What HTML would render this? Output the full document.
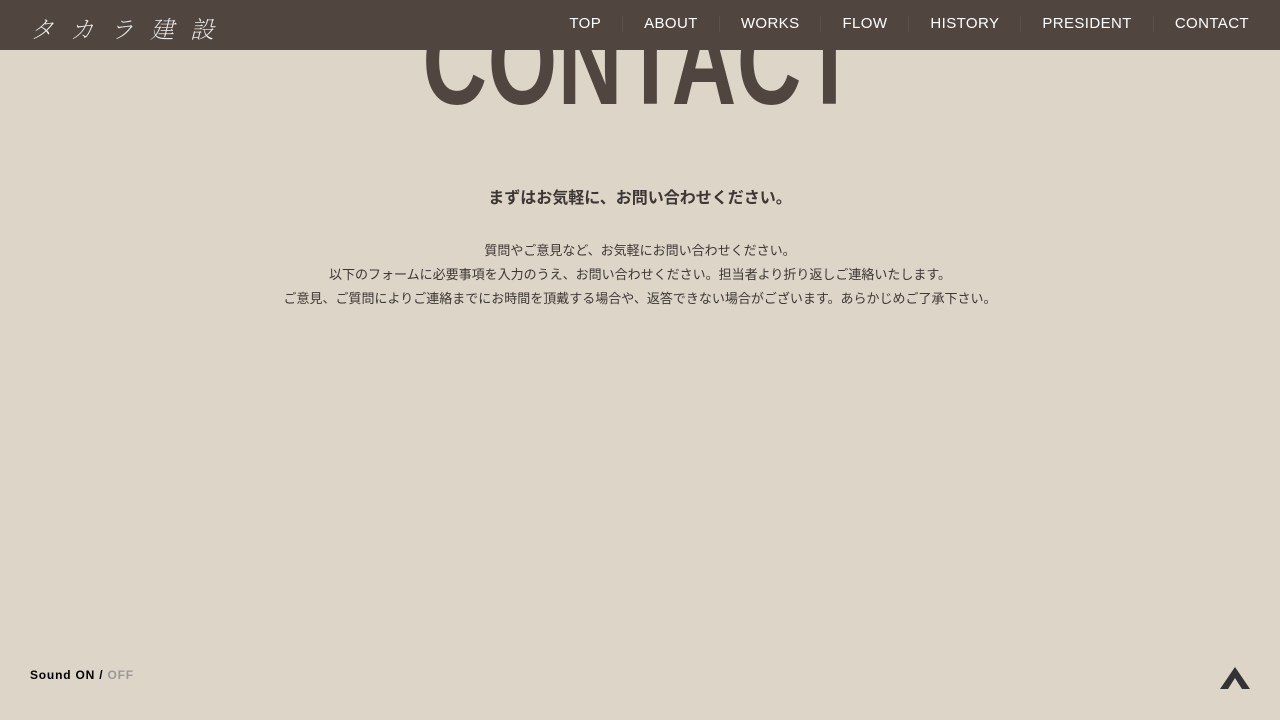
<!DOCTYPE html>
<html><head><meta charset="utf-8">
<style>
*{margin:0;padding:0;box-sizing:border-box}
html,body{width:1280px;height:720px;overflow:hidden;background:#ddd5c8;font-family:"Liberation Sans","Noto Sans CJK JP",sans-serif}
.big{position:absolute;top:0px;left:0;width:1280px;text-align:center;font-weight:bold;font-size:124px;line-height:124px;color:#51463f;letter-spacing:1px}
.big span{display:inline-block;transform:scaleX(0.72);transform-origin:center}
header{position:absolute;top:0;left:0;width:1280px;height:50px;background:#51463f}
.logo{position:absolute;left:30px;top:10px;color:#eee;font-family:"Noto Serif CJK SC",serif;font-size:24px;letter-spacing:16px;font-style:italic;font-weight:200}
nav{position:absolute;right:10px;top:0;height:47px;display:flex;align-items:center}
nav a{color:#fff;font-size:15px;letter-spacing:0.4px;padding:0 21px;border-left:1px solid #5d524b;line-height:16px;text-decoration:none}
nav a:first-child{border-left:none}
h2{position:absolute;top:184px;width:1280px;text-align:center;font-size:16px;font-weight:bold;color:#3d3733}
.p{position:absolute;top:239px;width:1280px;text-align:center;font-size:13px;line-height:24px;color:#3d3733}
.snd{position:absolute;left:30px;top:668px;font-size:12px;font-weight:bold;color:#000;letter-spacing:.8px}
.snd span{color:#999}
</style></head><body>
<div class="big"><span>CONTACT</span></div>
<header><div class="logo">タカラ建設</div>
<nav><a>TOP</a><a>ABOUT</a><a>WORKS</a><a>FLOW</a><a>HISTORY</a><a>PRESIDENT</a><a>CONTACT</a></nav></header>
<h2>まずはお気軽に、お問い合わせください。</h2>
<div class="p">質問やご意見など、お気軽にお問い合わせください。<br>以下のフォームに必要事項を入力のうえ、お問い合わせください。担当者より折り返しご連絡いたします。<br>ご意見、ご質問によりご連絡までにお時間を頂戴する場合や、返答できない場合がございます。あらかじめご了承下さい。</div>
<div class="snd">Sound ON / <span>OFF</span></div>
<svg style="position:absolute;left:1220px;top:667px" width="30" height="22" viewBox="0 0 30 22"><path d="M15 0 L30 22 L22 22 L15 11 L8 22 L0 22 Z" fill="#333"/></svg>
</body></html>
